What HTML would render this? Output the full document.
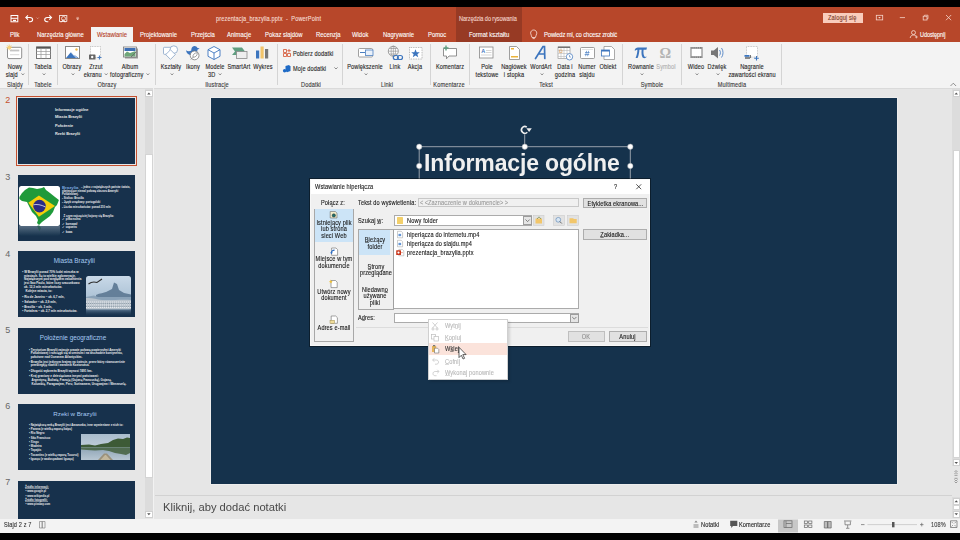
<!DOCTYPE html>
<html><head><meta charset="utf-8">
<style>
*{margin:0;padding:0;box-sizing:border-box}
html,body{width:960px;height:540px;overflow:hidden;background:#000;font-family:"Liberation Sans",sans-serif;color:#262626}
.a{position:absolute}
.t{position:absolute;white-space:nowrap;line-height:1}
.c{transform:translateX(-50%)}
#title{left:0;top:7px;width:960px;height:34.5px;background:#B7472A}
#ctx{left:455.8px;top:7px;width:66.2px;height:34.5px;background:#973A24}
#ribbon{left:0;top:41.5px;width:960px;height:47px;background:#F3F3F3;border-bottom:1px solid #DADADA}
#main{left:0;top:88.5px;width:960px;height:430.5px;background:#E6E6E6}
#status{left:0;top:519px;width:960px;height:13.6px;background:#F3F3F3}
.tab{position:absolute;top:32.2px;font-size:6.7px;transform:scaleX(.88);transform-origin:0 0;-webkit-text-stroke:0.1px currentColor;color:#fff;white-space:nowrap;line-height:5.85px}
.rl{position:absolute;font-size:6.5px;letter-spacing:.15px;-webkit-text-stroke:0.12px currentColor;color:#262626;white-space:nowrap;line-height:5.95px;transform:translateX(-50%) scaleX(.86);text-align:center}
.gl{position:absolute;top:82px;font-size:6.5px;letter-spacing:.15px;-webkit-text-stroke:0.12px currentColor;color:#3a3a3a;white-space:nowrap;line-height:5.95px;transform:translateX(-50%) scaleX(.86)}
.sep{position:absolute;top:44px;width:1px;height:41px;background:#D4D4D4}
.dd{display:inline-block;width:2.2px;height:2.2px;border-right:0.7px solid #777;border-bottom:0.7px solid #777;transform:rotate(45deg);vertical-align:1.5px;margin-left:1.5px}
.d{position:absolute;font-size:6.5px;letter-spacing:.15px;-webkit-text-stroke:0.12px currentColor;transform:scaleX(.86);transform-origin:0 0;color:#1a1a1a;white-space:nowrap;line-height:5.95px}
.dc{position:absolute;font-size:6.5px;letter-spacing:.15px;-webkit-text-stroke:0.12px currentColor;transform:translateX(-50%) scaleX(.86);color:#1a1a1a;white-space:nowrap;line-height:5.95px;text-align:center}
.btn{position:absolute;background:#E1E1E1;border:0.6px solid #ADADAD;padding-top:1px;font-size:6.5px;letter-spacing:.15px;color:#1a1a1a;text-align:center;display:flex;align-items:center;justify-content:center;white-space:nowrap;line-height:5.95px}
.btn span{display:inline-block;transform:scaleX(.86);-webkit-text-stroke:0.12px currentColor}
.m{position:absolute;left:445.3px;font-size:6.5px;letter-spacing:.15px;-webkit-text-stroke:0.12px currentColor;transform:scaleX(.86);transform-origin:0 0;white-space:nowrap;line-height:5.95px}
u{text-decoration:none;box-shadow:inset 0 -0.45px currentColor}
.thumb{position:absolute;left:18px;width:117px;height:66px;background:#17314C;overflow:hidden}
.num{position:absolute;left:5.2px;font-size:9px;color:#666;line-height:1}
</style></head><body>
<div id="title" class="a"></div>
<div id="ctx" class="a"></div>
<div id="ribbon" class="a"></div>
<div id="main" class="a"></div>
<div id="status" class="a"></div>

<!-- title bar text -->
<div class="d" style="left:216.3px;top:15.8px;color:#F6DDD4">prezentacja_brazylia.pptx &nbsp;- &nbsp;PowerPoint</div>
<div class="d" style="left:458.8px;top:16px;letter-spacing:-0.1px;color:#F2D3C9">Narzędzia do rysowania</div>


<svg class="a" style="left:0;top:0" width="960" height="42" viewBox="0 0 960 42">
<g fill="none" stroke="#fff" stroke-width="1">
<!-- save -->
<rect x="11" y="15.5" width="6.8" height="6.3" stroke-width="1"/>
<path d="M11 18.3H17.8" stroke-width="1"/>
<rect x="13" y="19.8" width="3" height="1.3" fill="#fff" stroke="none"/>
<!-- undo -->
<path d="M26.5 17.5H30C31.8 17.5 32.6 18.6 32.6 19.6C32.6 20.8 31.6 21.7 30.2 21.7H29" stroke-width="1.1"/>
<path d="M28 15.3L25.8 17.5L28 19.7" stroke-width="1.1"/>
<path d="M36.5 17.6L37.6 18.7L38.7 17.6" stroke="#F0C6B8" stroke-width="0.6"/>
<!-- redo -->
<path d="M50.8 17.5H47.3C45.5 17.5 44.7 18.6 44.7 19.6C44.7 20.8 45.7 21.7 47.1 21.7H48.3" stroke-width="1.1"/>
<path d="M49.3 15.3L51.5 17.5L49.3 19.7" stroke-width="1.1"/>
<!-- presenter -->
<path d="M59 15.5H67.3M59.5 16V21.5H66.8V16" stroke-width="0.8"/>
<circle cx="63.5" cy="18.5" r="2" stroke-width="0.7"/>
<path d="M61 22.5L63.2 19.5L65 22.5" stroke-width="0.7"/>
<!-- customize -->
<path d="M76.4 17.4H78.9M76.6 18.6L77.65 19.9L78.7 18.6Z" stroke="#F0C6B8" stroke-width="0.6" fill="#F0C6B8"/>
<!-- ribbon display options -->
<rect x="876.3" y="15.3" width="6.4" height="4.6" stroke="#F6D5CB" stroke-width="0.8"/>
<path d="M878.2 17L879.5 18.4L880.8 17Z" fill="#F6D5CB" stroke="none"/>
<!-- minimize -->
<path d="M899.8 17.6H905" stroke="#F6D5CB" stroke-width="0.8"/>
<!-- restore -->
<rect x="923.2" y="16.2" width="3.8" height="3.8" stroke="#F6D5CB" stroke-width="0.8"/>
<path d="M924.5 16V15.2H928V18.7H927" stroke="#F6D5CB" stroke-width="0.7"/>
<!-- close -->
<path d="M946 15L951.2 20.2M951.2 15L946 20.2" stroke="#F6D5CB" stroke-width="0.8"/>
<!-- share -->
<circle cx="913.5" cy="32.6" r="2" stroke="#F6E0D8" stroke-width="0.8"/>
<path d="M910.2 38C910.4 36 911.7 35 913.5 35C914.5 35 915.3 35.3 915.9 35.9" stroke="#F6E0D8" stroke-width="0.8"/>
<path d="M916.4 35.6V38.4M915 37H917.8" stroke="#F6E0D8" stroke-width="0.7"/>
<!-- lightbulb -->
<path d="M532 37.5C532 36 530.6 35 530.6 33.2C530.6 31.3 532 30 533.7 30C535.4 30 536.8 31.3 536.8 33.2C536.8 35 535.4 36 535.4 37.5Z" stroke="#FBE5DE" stroke-width="0.8"/>
<path d="M532.6 38.6H534.8" stroke="#FBE5DE" stroke-width="0.8"/>
</g>
</svg>
<div class="a" style="left:823px;top:13px;width:40px;height:9.5px;background:#F9CDBD"></div>
<div class="d" style="left:827.8px;top:15px;color:#7A3A28">Zaloguj się</div>

<!-- tabs -->
<div class="a" style="left:90.5px;top:27px;width:42.5px;height:15px;background:#F3F3F3"></div>
<div class="tab" style="left:10px">Plik</div>
<div class="tab" style="left:37px">Narzędzia główne</div>
<div class="tab" style="left:96.6px;color:#B5401F">Wstawianie</div>
<div class="tab" style="left:140px">Projektowanie</div>
<div class="tab" style="left:191px">Przejścia</div>
<div class="tab" style="left:227px">Animacje</div>
<div class="tab" style="left:265px">Pokaz slajdów</div>
<div class="tab" style="left:316px">Recenzja</div>
<div class="tab" style="left:352px">Widok</div>
<div class="tab" style="left:383px">Nagrywanie</div>
<div class="tab" style="left:428px">Pomoc</div>
<div class="tab" style="left:469px">Format kształtu</div>
<div class="tab" style="left:543.5px;letter-spacing:-0.15px">Powiedz mi, co chcesz zrobić</div>
<div class="tab" style="left:920px;font-size:6.3px;letter-spacing:-0.1px">Udostępnij</div>



<svg class="a" style="left:0;top:0" width="960" height="90" viewBox="0 0 960 90">
<g fill="none" stroke-width="1">
<!-- Nowy slajd -->
<rect x="7.5" y="47.3" width="14.2" height="11.3" rx="1.5" stroke="#8f8f8f" fill="#fff"/>
<rect x="10" y="49.6" width="9.3" height="1.8" fill="#c4c4c4" stroke="none"/>
<rect x="10" y="54.2" width="9.3" height="1" fill="#d6d6d6" stroke="none"/>
<path d="M9.2 44.6V50.2M6.4 47.4H12M7.2 45.4L11.2 49.4M11.2 45.4L7.2 49.4" stroke="#F2C45E" stroke-width="0.8"/>
<circle cx="9.2" cy="47.4" r="1.5" fill="#F6D27A" stroke="none"/>
<!-- Tabela -->
<rect x="36.5" y="47" width="14" height="11.5" stroke="#777" fill="#fff"/>
<rect x="36.5" y="46.7" width="14" height="2" fill="#555" stroke="none"/>
<path d="M36.5 51.5H50.5M36.5 54.5H50.5M41 48.5V58.5M46 48.5V58.5" stroke="#999" stroke-width="0.7"/>
<!-- Obrazy -->
<rect x="65.5" y="46.5" width="14" height="12" stroke="#888" fill="#fff"/>
<path d="M66 58L71 52L76 58Z" fill="#3C75BE" stroke="none"/>
<path d="M72 58L74.5 55L78.5 58Z" fill="#3C75BE" stroke="none"/>
<path d="M70.5 51.8L76.6 58" stroke="#fff" stroke-width="0.8"/>
<circle cx="76.5" cy="49.5" r="1.2" fill="#F0B847" stroke="none"/>
<!-- Zrzut ekranu -->
<rect x="90.5" y="46.5" width="10" height="11" stroke="#999" stroke-dasharray="0.8 0.8" stroke-width="0.6" fill="#fff"/>
<rect x="89" y="54.5" width="6.5" height="5" rx="0.6" fill="#666" stroke="none"/>
<circle cx="92.2" cy="57" r="1.2" fill="#fff" stroke="none"/>
<path d="M99.5 55.5V59.5M97.5 57.5H101.5" stroke="#4C7FC0" stroke-width="1.2"/>
<!-- Album -->
<rect x="125" y="48.5" width="13" height="10" fill="#9a9a9a" stroke="none"/>
<rect x="123.5" y="47" width="13" height="10" fill="#fff" stroke="#777" stroke-width="0.8"/>
<rect x="124.5" y="48" width="11" height="3" fill="#3D6FB4" stroke="none"/>
<path d="M124.5 54L127 51.5L130 53L135.5 51V56.5H124.5Z" fill="#6fa679" stroke="none"/>
<path d="M131 57L136 52" stroke="#666" stroke-width="0.8"/>
<!-- Ksztalty -->
<rect x="163.5" y="47.3" width="7.5" height="7" rx="0.8" stroke="#86A3C6" stroke-width="0.8" fill="#fff"/>
<circle cx="173.8" cy="49.6" r="3.8" stroke="#86A3C6" stroke-width="0.8" fill="#fff"/>
<path d="M170.5 49.8L175.3 54.6L170.5 59.4L165.7 54.6Z" stroke="#86A3C6" stroke-width="0.8" fill="#fff"/>
<!-- Ikony -->
<path d="M186 50.2C187.5 51.5 189.5 51.6 191.3 50.6C191 48.2 192.3 46.2 194.3 46C195.8 45.9 196.8 46.8 197.2 47.8L199.6 48.4L197.4 49.8C197.6 53 195 55 191.5 55C188.3 55 186.4 53 186 50.2Z" fill="#3C75BE" stroke="none"/>
<circle cx="194.6" cy="55.4" r="4.4" fill="#fff" stroke="#7a7a7a" stroke-width="0.8"/>
<path d="M190.8 59.6L193 57.2M193 57.2C192.6 55 194 53 197.3 52.6C197.4 55.5 195.8 57.4 193 57.2Z" stroke="#7a7a7a" stroke-width="0.7" fill="none"/>
<!-- Modele 3D -->
<path d="M214 46.5L220 49.7V56.3L214 59.5L208 56.3V49.7Z" stroke="#3C75BE" stroke-width="0.9" fill="#fff"/>
<path d="M208 49.7L214 53L220 49.7M214 53V59.5" stroke="#3C75BE" stroke-width="0.9"/>
<!-- SmartArt -->
<path d="M232 47.5H242L245 51.5L242 55H232L235 51.5Z" fill="#5F9E80" stroke="none"/>
<rect x="236.5" y="51.5" width="10.5" height="7" fill="#eee" stroke="#8a8a8a" stroke-width="0.8"/>
<!-- Wykres -->
<rect x="256" y="50.5" width="3.2" height="8" fill="#3C75BE" stroke="none"/>
<rect x="260.5" y="46.5" width="3.2" height="12" fill="#F2C46A" stroke="none"/>
<rect x="265" y="49" width="3.2" height="9.5" fill="#777" stroke="none"/>
<!-- Pobierz dodatki -->
<path d="M283.5 49.5h3v3h-3zM283.5 53.5h3v3h-3zM287.5 53.5h3v3h-3z" stroke="#D35230" stroke-width="0.8"/>
<path d="M289 49V52.5M287.3 50.7H290.8" stroke="#D35230" stroke-width="0.8"/>
<!-- Moje dodatki -->
<path d="M285.5 66L289 65L290.5 66.5V71L287 72.3L285.5 71Z" fill="#1F6BC6" stroke="none"/>
<circle cx="284.6" cy="70.8" r="1.7" fill="#1F6BC6" stroke="none"/>
<!-- Powiekszenie -->
<rect x="358.5" y="48.5" width="14" height="8.5" rx="1" stroke="#8a8a8a" stroke-width="0.8" fill="#fff"/>
<rect x="365.5" y="50" width="7.5" height="5.5" stroke="#4C7FC0" stroke-width="0.8" fill="#EAF1FA"/>
<path d="M360 52.5H365" stroke="#4C7FC0" stroke-width="1"/>
<!-- Link -->
<circle cx="393.3" cy="51.2" r="5" stroke="#888" stroke-width="0.8" fill="#fff"/>
<path d="M388.3 51.2H398.3M393.3 46.2V56.2M389.5 48.5H397M389.5 54H397" stroke="#888" stroke-width="0.6"/>
<ellipse cx="393.3" cy="51.2" rx="2.2" ry="5" stroke="#888" stroke-width="0.6"/>
<rect x="393.3" y="55.5" width="5" height="4" rx="2" stroke="#3C75BE" stroke-width="1.2"/>
<rect x="397.5" y="55.5" width="5" height="4" rx="2" stroke="#3C75BE" stroke-width="1.2"/>
<!-- Akcja -->
<rect x="409.5" y="47.5" width="12.5" height="11.5" stroke="#777" stroke-width="0.6" stroke-dasharray="0.8 0.9" fill="#fff"/>
<path d="M415.5 49.2L416.7 52.2L419.8 52.3L417.4 54.3L418.2 57.3L415.5 55.6L412.8 57.3L413.6 54.3L411.2 52.3L414.3 52.2Z" fill="#3C75BE" stroke="none"/>
<!-- Komentarz -->
<path d="M443.5 48.5H456.5V56H449L446.5 58.8V56H443.5Z" stroke="#777" stroke-width="0.8" fill="#fff"/>
<path d="M446 45.5V50.5M443.5 48H448.5" stroke="#5F9E80" stroke-width="1.4"/>
<!-- Pole tekstowe -->
<rect x="479.5" y="47" width="13.5" height="11" stroke="#888" stroke-width="0.8" fill="#fff"/>
<text x="481.3" y="53.3" font-size="5.5" font-family="Liberation Sans" font-weight="bold" fill="#3C75BE" stroke="none">A</text>
<path d="M486 50.5H491.5M486 52.5H491.5M481 55H491.5" stroke="#ccc" stroke-width="0.8"/>
<!-- Naglowek -->
<path d="M509.5 46.5H516.5L519.5 49.5V59.5H509.5Z" stroke="#888" stroke-width="0.8" fill="#fff"/>
<rect x="511" y="48" width="3" height="1.5" fill="#EBB33A" stroke="none"/>
<rect x="511" y="56" width="7" height="1.5" fill="#EBB33A" stroke="none"/>
<!-- WordArt -->
<path d="M535.5 58.5L543 46.5H544.5L544.8 58.5M538.5 54H544.5" stroke="#3C75BE" stroke-width="1.7" stroke-linecap="round"/>
<!-- Data i godzina -->
<rect x="558" y="47" width="12" height="11.5" stroke="#999" stroke-width="0.7" fill="#fff"/>
<rect x="558" y="46.6" width="12" height="1.3" fill="#666" stroke="none"/>
<path d="M558 50.5H570M558 53.5H570M558 56.5H566M561 48V58.5M564 48V58.5M567 48V54" stroke="#bbb" stroke-width="0.6"/>
<rect x="559.5" y="50" width="2.5" height="2.5" stroke="#E0A060" stroke-width="0.6"/>
<circle cx="569.5" cy="56.8" r="3.2" stroke="#4C7FC0" stroke-width="0.8" fill="#fff"/>
<path d="M569.5 55V57H571" stroke="#4C7FC0" stroke-width="0.6"/>
<!-- Numer slajdu -->
<rect x="580.5" y="47.5" width="14" height="11" rx="1" stroke="#888" stroke-width="0.8" fill="#fff"/>
<path d="M582 49.5H593" stroke="#ddd" stroke-width="0.8"/>
<path d="M586.6 50.8L585.6 56.2M588.6 50.8L587.6 56.2M585 52.5H589.6M584.6 54.5H589.2" stroke="#3C75BE" stroke-width="0.6"/>
<!-- Obiekt -->
<path d="M604 46.5H611.5L614.5 49.5V59.5H604Z" stroke="#888" stroke-width="0.7" fill="#fff"/>
<rect x="601.5" y="50" width="8" height="6" stroke="#3C75BE" stroke-width="0.8" fill="#fff"/>
<rect x="601.5" y="50" width="8" height="1.5" fill="#3C75BE" stroke="none"/>
<!-- Rownanie -->
<path d="M634.6 50.2C635.2 48.3 636.3 47.5 638 47.5H647L646.4 49.8H643.6C643.3 52 643.4 54.5 644.3 56.3C644.7 57.1 645.4 57.3 646.3 56.6L646.6 57.1C645.6 58.3 643.8 58.6 642.6 57.4C641.5 56.1 641.3 53.2 641.6 49.8H639.4C639.2 52.6 638.7 55.8 637.6 58H635.6C636.7 55.6 637.3 52.6 637.4 49.8C636.4 49.8 635.7 50.2 635.2 50.8Z" fill="#3C75BE" stroke="none"/>
<!-- Symbol -->
<text x="659.5" y="58" font-size="14.5" font-family="Liberation Serif" font-weight="bold" fill="#b4b4b4" stroke="none">Ω</text>
<!-- Wideo -->
<rect x="690.5" y="47" width="12" height="11" fill="#777" stroke="none"/>
<rect x="691.5" y="48.8" width="10" height="7.4" fill="#fff" stroke="none"/>
<path d="M691.5 47.9H701.5M691.5 57.1H701.5" stroke="#fff" stroke-width="0.7" stroke-dasharray="1 0.9"/>
<!-- Dzwiek -->
<path d="M711 50.5H713.8L718 47V58.5L713.8 55H711Z" fill="#777" stroke="none"/>
<path d="M719.5 50C720.7 51.5 720.7 54 719.5 55.5M721.5 48C723.5 50.5 723.5 55 721.5 57.5" stroke="#3C75BE" stroke-width="0.8"/>
<!-- Nagranie -->
<rect x="746.5" y="46.5" width="11" height="10.5" stroke="#999" stroke-width="0.6" stroke-dasharray="0.8 0.8" fill="#fff"/>
<rect x="744.5" y="55" width="5" height="1.8" fill="#3C75BE" stroke="none"/>
<rect x="745" y="57" width="5" height="2" fill="#888" stroke="none"/>
<path d="M750.5 55V58" stroke="#555" stroke-width="0.8"/>
<path d="M756.5 56V60.5M754.2 58.2H758.8" stroke="#3C75BE" stroke-width="1.1"/>
</g>
</svg>

<!-- ribbon separators -->
<div class="sep" style="left:28px"></div>
<div class="sep" style="left:57px"></div>
<div class="sep" style="left:155px"></div>
<div class="sep" style="left:277px"></div>
<div class="sep" style="left:342px"></div>
<div class="sep" style="left:430px"></div>
<div class="sep" style="left:469px"></div>
<div class="sep" style="left:622px"></div>
<div class="sep" style="left:681px"></div>
<div class="sep" style="left:781px"></div>
<!-- ribbon labels row1 -->
<div class="rl" style="left:14.5px;top:63.5px">Nowy</div>
<div class="rl" style="left:14.5px;top:71.5px">slajd <svg width="4" height="3" style="margin-left:1.6px;vertical-align:0.8px;overflow:visible"><path d="M0.4 0.4L2 2L3.6 0.4" stroke="#6a6a6a" stroke-width="0.75" fill="none"/></svg></div>
<div class="rl" style="left:43px;top:63.5px">Tabela</div>
<div class="rl" style="left:43px;top:71.5px"><svg width="4" height="3" style="margin-left:1.6px;vertical-align:0.8px;overflow:visible"><path d="M0.4 0.4L2 2L3.6 0.4" stroke="#6a6a6a" stroke-width="0.75" fill="none"/></svg></div>
<div class="rl" style="left:72px;top:63.5px">Obrazy</div>
<div class="rl" style="left:72px;top:71.5px"><svg width="4" height="3" style="margin-left:1.6px;vertical-align:0.8px;overflow:visible"><path d="M0.4 0.4L2 2L3.6 0.4" stroke="#6a6a6a" stroke-width="0.75" fill="none"/></svg></div>
<div class="rl" style="left:96px;top:63.5px">Zrzut</div>
<div class="rl" style="left:96px;top:71.5px">ekranu <svg width="4" height="3" style="margin-left:1.6px;vertical-align:0.8px;overflow:visible"><path d="M0.4 0.4L2 2L3.6 0.4" stroke="#6a6a6a" stroke-width="0.75" fill="none"/></svg></div>
<div class="rl" style="left:130px;top:63.5px">Album</div>
<div class="rl" style="left:130px;top:71.5px">fotograficzny <svg width="4" height="3" style="margin-left:1.6px;vertical-align:0.8px;overflow:visible"><path d="M0.4 0.4L2 2L3.6 0.4" stroke="#6a6a6a" stroke-width="0.75" fill="none"/></svg></div>
<div class="rl" style="left:171px;top:63.5px">Kształty</div>
<div class="rl" style="left:171px;top:71.5px"><svg width="4" height="3" style="margin-left:1.6px;vertical-align:0.8px;overflow:visible"><path d="M0.4 0.4L2 2L3.6 0.4" stroke="#6a6a6a" stroke-width="0.75" fill="none"/></svg></div>
<div class="rl" style="left:192.5px;top:63.5px">Ikony</div>
<div class="rl" style="left:214.5px;top:63.5px">Modele</div>
<div class="rl" style="left:214.5px;top:71.5px">3D <svg width="4" height="3" style="margin-left:1.6px;vertical-align:0.8px;overflow:visible"><path d="M0.4 0.4L2 2L3.6 0.4" stroke="#6a6a6a" stroke-width="0.75" fill="none"/></svg></div>
<div class="rl" style="left:238.7px;top:63.5px">SmartArt</div>
<div class="rl" style="left:262.5px;top:63.5px">Wykres</div>
<div class="d" style="left:292.5px;top:50.5px;color:#262626">Pobierz dodatki</div>
<div class="d" style="left:292.5px;top:66.3px;color:#262626">Moje dodatki</div>
<div class="t" style="left:332.5px;top:67px;font-size:5.9px;color:#555"><svg width="4" height="3" style="margin-left:1.6px;vertical-align:0.8px;overflow:visible"><path d="M0.4 0.4L2 2L3.6 0.4" stroke="#6a6a6a" stroke-width="0.75" fill="none"/></svg></div>
<div class="rl" style="left:365.4px;top:63.5px">Powiększenie</div>
<div class="rl" style="left:365.4px;top:71.5px"><svg width="4" height="3" style="margin-left:1.6px;vertical-align:0.8px;overflow:visible"><path d="M0.4 0.4L2 2L3.6 0.4" stroke="#6a6a6a" stroke-width="0.75" fill="none"/></svg></div>
<div class="rl" style="left:395px;top:63.5px">Link</div>
<div class="rl" style="left:415.4px;top:63.5px">Akcja</div>
<div class="rl" style="left:449.6px;top:63.5px">Komentarz</div>
<div class="rl" style="left:486.5px;top:63.5px">Pole</div>
<div class="rl" style="left:486.5px;top:71.5px">tekstowe</div>
<div class="rl" style="left:513.75px;top:63.5px">Nagłówek</div>
<div class="rl" style="left:513.75px;top:71.5px">i stopka</div>
<div class="rl" style="left:540.8px;top:63.5px">WordArt</div>
<div class="rl" style="left:540.8px;top:71.5px"><svg width="4" height="3" style="margin-left:1.6px;vertical-align:0.8px;overflow:visible"><path d="M0.4 0.4L2 2L3.6 0.4" stroke="#6a6a6a" stroke-width="0.75" fill="none"/></svg></div>
<div class="rl" style="left:565.2px;top:63.5px">Data i</div>
<div class="rl" style="left:565.2px;top:71.5px">godzina</div>
<div class="rl" style="left:587px;top:63.5px">Numer</div>
<div class="rl" style="left:587px;top:71.5px">slajdu</div>
<div class="rl" style="left:608.3px;top:63.5px">Obiekt</div>
<div class="rl" style="left:640.8px;top:63.5px">Równanie</div>
<div class="rl" style="left:640.8px;top:71.5px"><svg width="4" height="3" style="margin-left:1.6px;vertical-align:0.8px;overflow:visible"><path d="M0.4 0.4L2 2L3.6 0.4" stroke="#6a6a6a" stroke-width="0.75" fill="none"/></svg></div>
<div class="rl" style="left:666.3px;top:63.5px;color:#B0B0B0">Symbol</div>
<div class="rl" style="left:696px;top:63.5px">Wideo</div>
<div class="rl" style="left:696px;top:71.5px"><svg width="4" height="3" style="margin-left:1.6px;vertical-align:0.8px;overflow:visible"><path d="M0.4 0.4L2 2L3.6 0.4" stroke="#6a6a6a" stroke-width="0.75" fill="none"/></svg></div>
<div class="rl" style="left:717.3px;top:63.5px">Dźwięk</div>
<div class="rl" style="left:717.3px;top:71.5px"><svg width="4" height="3" style="margin-left:1.6px;vertical-align:0.8px;overflow:visible"><path d="M0.4 0.4L2 2L3.6 0.4" stroke="#6a6a6a" stroke-width="0.75" fill="none"/></svg></div>
<div class="rl" style="left:752.3px;top:63.5px">Nagranie</div>
<div class="rl" style="left:752.3px;top:71.5px">zawartości ekranu</div>
<!-- group labels -->
<div class="gl" style="left:14.5px">Slajdy</div>
<div class="gl" style="left:43px">Tabele</div>
<div class="gl" style="left:106.7px">Obrazy</div>
<div class="gl" style="left:216.7px">Ilustracje</div>
<div class="gl" style="left:310.6px">Dodatki</div>
<div class="gl" style="left:386.7px">Linki</div>
<div class="gl" style="left:449px">Komentarze</div>
<div class="gl" style="left:545.8px">Tekst</div>
<div class="gl" style="left:652.3px">Symbole</div>
<div class="gl" style="left:731.5px">Multimedia</div>
<svg class="a" style="left:0;top:0" width="960" height="90"><path d="M950.5 86L953.3 83.2L956.1 86" stroke="#666" stroke-width="0.7" fill="none"/></svg>


<!-- slide pane -->
<div class="a" style="left:153px;top:88px;width:1px;height:431px;background:#F2F2F2"></div>
<div class="a" style="left:145px;top:89px;width:8px;height:428px;background:#DCDCDC"></div>
<div class="a" style="left:145px;top:89.5px;width:7.5px;height:7.5px;background:#fff;border:0.5px solid #d0d0d0"></div>
<div class="a" style="left:145px;top:154.2px;width:7.5px;height:323.8px;background:#fff;border:0.5px solid #d4d4d4"></div>
<div class="a" style="left:145px;top:510.5px;width:7.5px;height:7px;background:#fff;border:0.5px solid #d0d0d0"></div>

<div class="num" style="top:96.2px;color:#C4502F">2</div>
<div class="num" style="top:173.1px">3</div>
<div class="num" style="top:249.5px">4</div>
<div class="num" style="top:325.9px">5</div>
<div class="num" style="top:402.2px">6</div>
<div class="num" style="top:478.2px">7</div>

<div class="a" style="left:16px;top:96px;width:121px;height:70px;border:1.6px solid #C4502F;background:#E6E6E6"></div>
<div class="thumb" style="top:98px">
  <div class="t" style="left:37px;top:9.9px;font-size:3.9px;font-weight:bold;color:#e8e8e8">Informacje ogólne</div>
  <div class="t" style="left:37px;top:17.3px;font-size:3.9px;font-weight:bold;color:#e8e8e8">Miasta Brazylii</div>
  <div class="t" style="left:37px;top:26px;font-size:3.9px;font-weight:bold;color:#e8e8e8">Położenie</div>
  <div class="t" style="left:37px;top:33.5px;font-size:3.9px;font-weight:bold;color:#e8e8e8">Rzeki Brazylii</div>
</div>

<div class="thumb" style="top:175px">
  <div class="a" style="left:1.2px;top:11.1px;width:40.8px;height:40px;background:#fff;border-radius:2.5px"></div>
  <div class="a" style="left:1.2px;top:51.1px;width:40.8px;height:10px;background:linear-gradient(#6d8194,#15324C);opacity:.75;border-radius:0 0 2.5px 2.5px"></div>
  <svg class="a" style="left:0;top:0" width="117" height="66" viewBox="0 0 117 66">
    <path d="M1.4 22L4 18L7 15L11 12.5L15 13L19 14L24 13L26 12L28 15L32 18L37 22L40.9 25L39 30L37 32L35 37L32 41L28 44L24 47L21 50L19 48L20 45L18 41L14 37L12 33L9 27L4 26L1.4 24Z" fill="#1f9a3a"/>
    <path d="M10.3 27.8L20.9 20.6L37 31.1L20.9 41.7Z" fill="#F5CF0A"/>
    <circle cx="21.5" cy="31.1" r="6.3" fill="#2B2C86"/>
    <path d="M15.4 29.8C18.5 29 23 29.6 27.6 32" stroke="#fff" stroke-width="0.7" fill="none"/>
    <path d="M19 51L21 50L23 53L21.5 56Z" fill="#1c5a44" opacity=".6"/>
  </svg>
  <div class="t" style="left:44px;top:10.6px;font-size:4.3px;font-weight:bold;color:#7BA5DE">Brazylia</div>
  <div class="t" style="left:63px;top:11.8px;font-size:2.7px;font-weight:bold;color:#eee">– jedno z największych państw świata,</div>
  <div class="t" style="left:44px;top:15.8px;font-size:2.7px;font-weight:bold;color:#eee">obejmujące niemal połowę obszaru Ameryki</div>
  <div class="t" style="left:44px;top:18.6px;font-size:2.7px;font-weight:bold;color:#eee">Południowej.</div>
  <div class="t" style="left:44px;top:23.2px;font-size:2.7px;font-weight:bold;color:#eee">▪ Stolica: Brasilia</div>
  <div class="t" style="left:44px;top:27.3px;font-size:2.7px;font-weight:bold;color:#eee">▪ Język urzędowy: portugalski</div>
  <div class="t" style="left:44px;top:31.8px;font-size:2.7px;font-weight:bold;color:#eee">▪ Liczba mieszkańców: ponad 210 mln</div>
  <div class="t" style="left:45.5px;top:40.8px;font-size:2.7px;font-weight:bold;color:#eee">Z czym najczęściej kojarzy się Brazylia:</div>
  <div class="t" style="left:44px;top:44.3px;font-size:2.7px;font-weight:bold;color:#eee">✓ piłka nożna</div>
  <div class="t" style="left:44px;top:48.5px;font-size:2.7px;font-weight:bold;color:#eee">✓ karnawał</div>
  <div class="t" style="left:44px;top:52.4px;font-size:2.7px;font-weight:bold;color:#eee">✓ capoeira</div>
  <div class="t" style="left:44px;top:56.8px;font-size:2.7px;font-weight:bold;color:#eee">✓ kawa</div>
</div>

<div class="thumb" style="top:251.3px">
  <div class="t c" style="left:56.3px;top:7.2px;font-size:6.4px;color:#A6C9F2">Miasta Brazylii</div>
  <svg class="a" style="left:68.3px;top:24.3px" width="45" height="41" viewBox="0 0 45 41">
   <defs><linearGradient id="sky4" x1="0" y1="0" x2="0" y2="1"><stop offset="0" stop-color="#c9d9e8"/><stop offset="1" stop-color="#9db6cc"/></linearGradient>
   <linearGradient id="ref4" x1="0" y1="0" x2="0" y2="1"><stop offset="0" stop-color="#6f8aa3" stop-opacity=".8"/><stop offset="1" stop-color="#15324C" stop-opacity="0"/></linearGradient></defs>
   <rect x="0" y="0" width="45" height="33.4" rx="2.5" fill="url(#sky4)"/>
   <path d="M10 19C14 17 18 17 20 16L26 13L28 6.5L31 8L33 14L38 17L45 18.5V23H10Z" fill="#647f99"/>
   <path d="M0 21L8 19.5L12 21H45V24H0Z" fill="#8aa2b8"/>
   <path d="M0 22C6 21.5 10 23 16 24C24 25 34 23 45 24V33.4H0Z" fill="#b9c3cc"/>
   <path d="M0 26H45M0 29H45M0 31.5H45" stroke="#e6eaee" stroke-width="1" stroke-dasharray="1.2 0.8"/>
   <path d="M0 27.5H45M0 30.3H45" stroke="#6f7f8c" stroke-width="0.7" stroke-dasharray="0.8 1.3"/>
   <path d="M2.5 8C5 6 8 5.5 11 6.5L16 3" stroke="#2f2f2f" stroke-width="1.1" fill="none"/>
   <rect x="0" y="33.4" width="45" height="7" fill="url(#ref4)"/>
  </svg>
  <div class="t" style="left:4.3px;top:19.8px;font-size:3px;font-weight:bold;color:#ececec;line-height:3.65px">• W Brazylii ponad 70% ludzi mieszka w<br>&nbsp; miastach. Są to wielkie aglomeracje.<br>&nbsp; Największym pod względem zaludnienia<br>&nbsp; jest Sao Paulo, które liczy szacunkowo<br>&nbsp; ok. 12,3 mln mieszkańców.</div>
  <div class="t" style="left:7.5px;top:38.8px;font-size:3px;font-weight:bold;color:#ececec">Kolejne miasta, to:</div>
  <div class="t" style="left:4.3px;top:43.8px;font-size:3px;font-weight:bold;color:#ececec;line-height:4.7px">• Rio de Janeiro – ok. 6,7 mln,<br>• Salvador – ok. 2,9 mln,<br>• Brasilia – ok. 3 mln,<br>• Fortaleza – ok. 2,7 mln mieszkańców.</div>
</div>

<div class="thumb" style="top:327.8px">
  <div class="t c" style="left:55px;top:7.5px;font-size:6.4px;color:#A6C9F2">Położenie geograficzne</div>
  <div class="t" style="left:11px;top:20.8px;font-size:2.98px;font-weight:bold;color:#ececec;line-height:3.75px">• Terytorium Brazylii zajmuje prawie połowę powierzchni Ameryki<br>&nbsp;&nbsp;Południowej i rozciąga się w centrum i na wschodzie kontynentu,<br>&nbsp;&nbsp;położone nad Oceanem Atlantyckim.</div>
  <div class="t" style="left:11px;top:32.8px;font-size:2.98px;font-weight:bold;color:#ececec;line-height:3.75px">• Brazylia jest jedynym krajem na świecie, przez który równocześnie<br>&nbsp;&nbsp;przebiegają równik i zwrotnik Koziorożca.</div>
  <div class="t" style="left:11px;top:41.5px;font-size:2.98px;font-weight:bold;color:#ececec;line-height:4.8px">• Długość wybrzeża Brazylii wynosi 7491 km.<br>• Kraj graniczy z dziesięcioma innymi państwami:</div>
  <div class="t" style="left:13.5px;top:51.5px;font-size:2.98px;font-weight:bold;color:#ececec;line-height:3.75px">Argentyną, Boliwią, Francją (Gujaną Francuską), Gujaną,<br>Kolumbią, Paragwajem, Peru, Surinamem, Urugwajem i Wenezuelą.</div>
</div>

<div class="thumb" style="top:404.3px">
  <div class="t c" style="left:57px;top:6.8px;font-size:6.2px;color:#A6C9F2">Rzeki w Brazylii</div>
  <div class="t" style="left:11px;top:18.6px;font-size:2.85px;font-weight:bold;color:#ececec;line-height:4.25px">• Największą rzeką Brazylii jest Amazonka, inne wymieniane z nich to:<br>• Parana (z wielką zaporą Itaipu)<br>• Rio Negro<br>• São Francisco<br>• Xingu<br>• Madeira<br>• Tapajós<br>• Tocantins (z wielką zaporą Tucurui)<br>• Iguaçu (z wodospadami Iguaçu)</div>
  <svg class="a" style="left:63.3px;top:30px" width="49" height="26" viewBox="0 0 49 26">
   <defs><linearGradient id="sky6" x1="0" y1="0" x2="0" y2="1"><stop offset="0" stop-color="#a9bccd"/><stop offset="1" stop-color="#d5dde3"/></linearGradient>
   <linearGradient id="wat6" x1="0" y1="0" x2="0" y2="1"><stop offset="0" stop-color="#8ea4b6"/><stop offset="1" stop-color="#b7c6d2"/></linearGradient></defs>
   <rect width="49" height="26" fill="url(#sky6)"/>
   <path d="M0 11L8 10.5L14 11.5L20 10L27 9L32 6L37 4.5L42 5L46 3.5L49 4V13.5H0Z" fill="#3d5a36"/>
   <rect y="13.5" width="49" height="12.5" fill="url(#wat6)"/>
   <path d="M0 13.5H49V19L45 21L40 20L34 19L28 17L22 16L14 16.5L6 16L0 15.5Z" fill="#44603e" opacity=".85"/>
   <path d="M17 26L23 19.5H26L32 26Z" fill="#9a917c"/>
   <path d="M19.5 26L24 21H25L29.5 26Z" fill="#c2b79c"/>
  </svg>
</div>

<div class="thumb" style="top:481px;height:38px">
  <div class="t" style="left:7px;top:4.6px;font-size:2.8px;font-weight:bold;color:#e8e8e8;padding-bottom:0.3px;background:linear-gradient(#e8e8e8,#e8e8e8) 0 100%/100% 0.45px no-repeat">Źródło informacji:</div>
  <div class="t" style="left:7.5px;top:9.2px;font-size:2.7px;font-weight:bold;color:#e8e8e8;line-height:4.5px">• www.google.pl<br>• www.wikipedia.pl</div>
  <div class="t" style="left:7px;top:17.8px;font-size:2.8px;font-weight:bold;color:#e8e8e8;padding-bottom:0.3px;background:linear-gradient(#e8e8e8,#e8e8e8) 0 100%/100% 0.45px no-repeat">Źródło fotografii:</div>
  <div class="t" style="left:7.5px;top:22.8px;font-size:2.7px;font-weight:bold;color:#e8e8e8">• www.pixabay.com</div>
</div>


<!-- main slide -->
<div class="a" style="left:210.5px;top:98px;width:686.5px;height:386.3px;background:#15324C;box-shadow:0 0 0 1px #EDEDED"></div>
<div class="t" style="left:424.3px;top:151.9px;font-size:23px;font-weight:bold;letter-spacing:-0.15px;color:#F0F0F0;will-change:transform">Informacje ogólne</div>
<svg class="a" style="left:0;top:0" width="960" height="540" viewBox="0 0 960 540">
  <g stroke="#AEB4BB" stroke-width="0.85" fill="none">
    <path d="M419.2 146.7H630.3M419.2 146.7V180M630.3 146.7V180M524.7 146.7V134.5"/>
  </g>
  <g fill="#fff" stroke="#9aa0a6" stroke-width="0.5">
    <circle cx="419.2" cy="146.7" r="2.7"/><circle cx="524.8" cy="146.7" r="2.7"/><circle cx="630.3" cy="146.7" r="2.7"/>
    <circle cx="419.2" cy="166" r="2.7"/><circle cx="630.3" cy="166" r="2.7"/>
  </g>
  <path d="M526.8 127.1A3.4 3.4 0 1 0 527.3 132.3" stroke="#EDEDED" stroke-width="1.6" fill="none"/>
  <path d="M526.4 128.2L531.8 128.2L529.1 131.9Z" fill="#EDEDED"/>
</svg>



<!-- right scrollbar -->
<div class="a" style="left:952px;top:89px;width:8px;height:377px;background:#DCDCDC"></div>
<div class="a" style="left:952.5px;top:89.5px;width:7.5px;height:7.5px;background:#fff;border:0.5px solid #d0d0d0"></div>
<div class="a" style="left:952.5px;top:150px;width:7.5px;height:308px;background:#fff;border:0.5px solid #d4d4d4"></div>
<div class="a" style="left:952.5px;top:459px;width:7.5px;height:7px;background:#fff;border:0.5px solid #d0d0d0"></div>
<svg class="a" style="left:0;top:0" width="960" height="540" viewBox="0 0 960 540">
 <g stroke="#666" stroke-width="0.6" fill="none">
  <path d="M954.5 472L956 470.5L957.5 472M954.5 474L956 472.5L957.5 474M954.5 475.3H957.5"/>
  <path d="M954.5 478.3H957.5M954.5 479.5L956 481L957.5 479.5M954.5 481.5L956 483L957.5 481.5"/>
 </g>
</svg>
<!-- notes scrollbar -->
<div class="a" style="left:952px;top:497px;width:8px;height:21px;background:#DCDCDC"></div>
<div class="a" style="left:952.5px;top:497.5px;width:7.5px;height:7px;background:#fff;border:0.5px solid #d0d0d0"></div>
<div class="a" style="left:952.5px;top:505px;width:7.5px;height:5px;background:#fff;border:0.5px solid #d4d4d4"></div>
<div class="a" style="left:952.5px;top:510.5px;width:7.5px;height:7px;background:#fff;border:0.5px solid #d0d0d0"></div>

<!-- status bar -->
<div class="d" style="left:4px;top:522.3px;color:#333">Slajd 2 z 7</div>
<svg class="a" style="left:0;top:0" width="960" height="540" viewBox="0 0 960 540">
 <g stroke="#777" stroke-width="0.6" fill="none">
  <path d="M39.5 521.5H42.2V528H39.5ZM42.2 521.5H45V528H42.2Z"/>
  <!-- notatki -->
  <path d="M693.5 528H698.5V524H693.5Z" fill="#bbb" stroke="none"/>
  <path d="M696 520.5L694.3 522.5H697.7Z" fill="#888" stroke="none"/>
 </g>
 <path d="M730.2 520.8H737.3V526H733L731.2 528V526H730.2Z" fill="#555"/>
 <rect x="778" y="519.5" width="20" height="13" fill="#C8C8C8"/>
 <g stroke="#666" stroke-width="0.7" fill="none">
  <rect x="784" y="520.8" width="8" height="6.8"/>
  <path d="M786 521V527.5M786 523.5H791.5"/>
  <rect x="804.3" y="521" width="3.2" height="2.4"/><rect x="808.7" y="521" width="3.2" height="2.4"/>
  <rect x="804.3" y="525" width="3.2" height="2.4"/><rect x="808.7" y="525" width="3.2" height="2.4"/>
  <path d="M824.3 521.5H827.7V528H824.3ZM827.7 521.5H831.2V528H827.7Z" fill="#bbb"/>
  <path d="M844 521H851.4M845 521.5V524.8H850.4V521.5M847.7 525V528M846 528.3H849.4"/>
  <path d="M861 524.6H864.5M920 524.6H923.5M921.75 522.8V526.4"/>
  <path d="M950.5 520.8H957V527.5H950.5Z"/>
  <path d="M951.5 521.8L953 523.3M956 521.8L954.5 523.3M951.5 526.5L953 525M956 526.5L954.5 525" stroke-width="0.6"/>
 </g>
 <path d="M867.4 524.6H917" stroke="#B8B8B8" stroke-width="0.6"/>
 <rect x="892" y="522" width="2.5" height="5.3" fill="#555"/>
</svg>
<div class="d" style="left:701px;top:522.4px;color:#262626">Notatki</div>
<div class="d" style="left:738.6px;top:522.4px;color:#262626">Komentarze</div>
<div class="d" style="left:930.8px;top:522.4px;color:#444">108%</div>

<svg class="a" style="left:0;top:0" width="960" height="540" viewBox="0 0 960 540"><g fill="#555">
<path d="M147.1 94.5L148.85 92.5L150.6 94.5Z"/>
<path d="M147.1 513.3L148.85 515.3L150.6 513.3Z"/>
<path d="M954.5 94.5L956.25 92.5L958 94.5Z"/>
<path d="M954.5 462L956.25 464L958 462Z"/>
<path d="M954.5 502.3L956.25 500.3L958 502.3Z"/>
<path d="M954.5 513.3L956.25 515.3L958 513.3Z"/>
</g></svg>
<!-- dialog -->
<div class="a" style="left:309px;top:178px;width:342px;height:169px;background:rgba(0,0,0,0.4)"></div>
<div class="a" style="left:310px;top:179px;width:340px;height:167px;background:#F0F0F0;border:1px solid #F7F7F7"></div>
<div class="a" style="left:310.5px;top:179.5px;width:339px;height:14.5px;background:#fff"></div>
<div class="d" style="left:314.7px;top:184px">Wstawianie hiperłącza</div>
<div class="d" style="left:614px;top:183.5px;font-size:6.5px">?</div>
<svg class="a" style="left:0;top:0" width="960" height="540" viewBox="0 0 960 540">
 <path d="M636.3 184.3L641.2 189.2M641.2 184.3L636.3 189.2" stroke="#222" stroke-width="0.75" fill="none"/>
</svg>
<div class="d" style="left:320.8px;top:200px">Połącz z:</div>
<div class="d" style="left:358px;top:200px">Tekst do wyświetlenia:</div>
<div class="a" style="left:417.5px;top:198.3px;width:161.2px;height:9.2px;background:#F0F0F0;border:0.6px solid #C8C8C8"></div>
<div class="d" style="left:420px;top:200.2px;color:#9a9a9a">&lt;&thinsp;&lt;Zaznaczenie w dokumencie&gt;&thinsp;&gt;</div>
<div class="btn" style="left:583.3px;top:198.3px;width:63.4px;height:10px"><span>Etykietka ekranowa...</span></div>

<!-- left nav -->
<div class="a" style="left:313.9px;top:208.6px;width:39.8px;height:133.1px;border:0.7px solid #A8A8A8;background:#F0F0F0"></div>
<div class="a" style="left:314.5px;top:209.2px;width:38.6px;height:32.5px;background:#CCE4F7"></div>
<div class="dc" style="left:333.8px;top:219.8px;line-height:6.6px">Istniejący plik<br>lub strona<br>sieci Web</div>
<div class="dc" style="left:333.8px;top:256px;line-height:6.8px">Miejsce w tym<br>dokumencie</div>
<div class="dc" style="left:333.8px;top:289px;line-height:6.1px">Utwórz nowy<br>dokument</div>
<div class="dc" style="left:333.8px;top:324.5px">Adres e-mail</div>
<svg class="a" style="left:0;top:0" width="960" height="540" viewBox="0 0 960 540">
 <!-- icon1 -->
 <path d="M330.2 211.5H335.3L337 213.2V218H330.2Z" fill="#F3EDCB" stroke="#6a6a6a" stroke-width="0.6"/>
 <circle cx="333.8" cy="215.4" r="1.7" fill="#1E6E6A" stroke="#222" stroke-width="0.4"/>
 <!-- icon2 -->
 <path d="M331.6 248H336L337.6 249.6V255.3H331.6Z" fill="#fff" stroke="#6a6a6a" stroke-width="0.6"/>
 <path d="M334.6 250.2C332.6 250.2 331.4 251.3 331.4 253.2" stroke="#2F6FC4" stroke-width="1.2" fill="none"/>
 <path d="M330.3 252.2L331.4 254.3L332.8 252.4Z" fill="#2F6FC4"/>
 <!-- icon3 -->
 <path d="M331 280.5H335.5L337.2 282.2V287.6H331Z" fill="#fff" stroke="#6a6a6a" stroke-width="0.6"/>
 <path d="M330.8 279.6L331.4 281L332.8 281.2L331.6 282L332 283.4L330.8 282.6L329.6 283.4L330 282L328.9 281.2L330.2 281Z" fill="#EFC23A"/>
 <!-- icon4 -->
 <path d="M331.2 316H335.7L337.4 317.7V323.3H331.2Z" fill="#fff" stroke="#6a6a6a" stroke-width="0.6"/>
 <rect x="330" y="320.2" width="4.6" height="3.3" fill="#F0DC9A" stroke="#8a7a40" stroke-width="0.4"/>
</svg>

<!-- search row -->
<div class="d" style="left:358px;top:218px">Szukaj <u>w</u>:</div>
<div class="a" style="left:394px;top:215px;width:138px;height:11px;background:#fff;border:0.6px solid #ABABAB"></div>
<div class="a" style="left:396.5px;top:217.2px;width:6.5px;height:6.5px;background:#F3D06B;border-radius:0.6px"></div>
<div class="d" style="left:407px;top:218px">Nowy folder</div>
<div class="a" style="left:523px;top:215.6px;width:8.6px;height:9.8px;background:#E5E5E5;border:0.6px solid #9c9c9c"></div>
<svg class="a" style="left:0;top:0" width="960" height="540"><path d="M525.5 219.5L527.6 221.6L529.7 219.5" stroke="#555" stroke-width="0.7" fill="none"/></svg>
<svg class="a" style="left:0;top:0" width="960" height="540" viewBox="0 0 960 540">
 <rect x="533.5" y="215.3" width="10.5" height="10" fill="#E2E2E2" stroke="#C8C8C8" stroke-width="0.5"/>
 <rect x="535.5" y="218.5" width="6.5" height="5" fill="#F2C66A"/>
 <path d="M537 219L539 216.8L541 219" stroke="#5a7a3a" stroke-width="0.6" fill="none"/>
 <rect x="553.5" y="215.3" width="11" height="10" fill="#E2E2E2" stroke="#C8C8C8" stroke-width="0.5"/>
 <circle cx="558.3" cy="219.8" r="2.4" fill="#D8E6F3" stroke="#5583B5" stroke-width="0.6"/>
 <path d="M559.8 221.5L561.8 223.5" stroke="#444" stroke-width="0.8"/>
 <rect x="567.5" y="215.3" width="11" height="10" fill="#E2E2E2" stroke="#C8C8C8" stroke-width="0.5"/>
 <path d="M569.5 218.2H573L574 219H576.7V223.3H569.5Z" fill="#F2C66A"/>
</svg>

<!-- sub nav -->
<div class="a" style="left:358.3px;top:229px;width:35.5px;height:80.5px;border:0.7px solid #A8A8A8;background:#F0F0F0"></div>
<div class="a" style="left:359px;top:229.7px;width:31px;height:25.8px;background:#CCE4F7"></div>
<div class="dc" style="left:374.5px;top:237px;line-height:6.5px"><u>B</u>ieżący<br>folder</div>
<div class="dc" style="left:376px;top:264px;line-height:6.3px"><u>S</u>trony<br>przeglądane</div>
<div class="dc" style="left:374.5px;top:286.8px;line-height:6.5px">Niedawn<u>o</u><br>używane<br>pliki</div>

<!-- file list -->
<div class="a" style="left:393.3px;top:229.2px;width:185.4px;height:80.3px;background:#fff;border:0.7px solid #ABABAB;border-left:1.4px solid #A0A0A0"></div>
<svg class="a" style="left:0;top:0" width="960" height="540" viewBox="0 0 960 540">
 <path d="M397.5 231.3H401.2L402.6 232.7V237.8H397.5Z" fill="#fff" stroke="#9a9a9a" stroke-width="0.5"/>
 <circle cx="399.8" cy="235" r="1.8" fill="#CFE3F7"/><path d="M398.6 235H401" stroke="#1F5FBF" stroke-width="1.2"/>
 <path d="M397.5 240.3H401.2L402.6 241.7V246.8H397.5Z" fill="#fff" stroke="#9a9a9a" stroke-width="0.5"/>
 <circle cx="399.8" cy="244" r="1.8" fill="#CFE3F7"/><path d="M398.6 244H401" stroke="#1F5FBF" stroke-width="1.2"/>
 <path d="M398.8 249.4H402.4L403.8 250.8V255.8H398.8Z" fill="#fff" stroke="#9a9a9a" stroke-width="0.5"/>
 <rect x="396.2" y="250.3" width="4.8" height="4.6" rx="0.5" fill="#C9361B"/>
 <circle cx="398.5" cy="252.6" r="1.1" fill="#fff"/>
 <path d="M401.3 252.6H402.6" stroke="#E06040" stroke-width="0.8"/>
</svg>
<div class="d" style="left:406.9px;top:231.5px">hiperłącza do internetu.mp4</div>
<div class="d" style="left:406.9px;top:240.5px">hiperłącza do slajdu.mp4</div>
<div class="d" style="left:406.9px;top:249.5px">prezentacja_brazylia.pptx</div>
<div class="btn" style="left:583.3px;top:229.2px;width:63.4px;height:11.1px"><span><u>Z</u>akładka...</span></div>

<!-- address -->
<div class="d" style="left:358px;top:315px">A<u>d</u>res:</div>
<div class="a" style="left:394.4px;top:313px;width:184.3px;height:9.8px;background:#fff;border:0.6px solid #ABABAB"></div>
<div class="a" style="left:570px;top:313.5px;width:8.5px;height:9px;background:#E5E5E5;border:0.6px solid #9c9c9c"></div>
<svg class="a" style="left:0;top:0" width="960" height="540"><path d="M572.2 317L574.3 319.1L576.4 317" stroke="#555" stroke-width="0.7" fill="none"/></svg>
<div class="a" style="left:356px;top:327.3px;width:292px;height:0.7px;background:#DCDCDC"></div>
<div class="btn" style="left:567.5px;top:330.8px;width:37.2px;height:10.9px;color:#8f8f8f;border-color:#BFBFBF"><span>OK</span></div>
<div class="btn" style="left:609px;top:330.8px;width:37.7px;height:10.9px"><span>Anuluj</span></div>

<!-- context menu -->
<div class="a" style="left:429.5px;top:320.5px;width:80px;height:61px;background:rgba(0,0,0,0.12);filter:blur(1px)"></div>
<div class="a" style="left:428.3px;top:319.2px;width:79.7px;height:60.5px;background:#fff;border:0.6px solid #D0D0D0"></div>
<div class="a" style="left:429px;top:343px;width:78.3px;height:11.7px;background:#FBE3DB"></div>
<div class="m" style="top:323px;color:#B8B8B8">Wyt<u>n</u>ij</div>
<div class="m" style="top:334.8px;color:#B8B8B8"><u>K</u>opiuj</div>
<div class="m" style="top:346.2px;color:#333">W<u>k</u>lej</div>
<div class="m" style="top:358.8px;color:#B8B8B8"><u>C</u>ofnij</div>
<div class="m" style="top:370.3px;color:#B8B8B8"><u>W</u>ykonaj ponownie</div>
<svg class="a" style="left:0;top:0" width="960" height="540" viewBox="0 0 960 540">
 <g stroke="#BDBDBD" stroke-width="0.7" fill="none">
  <path d="M432.5 322.5L437.5 328M437.5 322.5L432.5 328"/>
  <circle cx="433" cy="329" r="1.1"/><circle cx="437" cy="329" r="1.1"/>
  <rect x="431.5" y="334.5" width="4" height="4.5"/><rect x="434" y="336.5" width="4.5" height="4.5" fill="#fff"/>
  <path d="M433 360H436.3C437.8 360 438.5 361 438.5 362.2C438.5 363.5 437.5 364.2 436.3 364.2H435M434.2 358.3L432.5 360L434.2 361.7"/>
  <path d="M438.5 371.5H435.2C433.7 371.5 433 372.5 433 373.7C433 375 434 375.7 435.2 375.7H436.5M437.3 369.8L439 371.5L437.3 373.2"/>
 </g>
 <rect x="432" y="346" width="4.2" height="6" fill="#E5B55A"/>
 <rect x="433" y="345" width="2.2" height="1.3" fill="#777"/>
 <path d="M434.5 348.2H437.5L438.8 349.5V353H434.5Z" fill="#fff" stroke="#555" stroke-width="0.5"/>
 <!-- cursor -->
 <path d="M459 347.3V357.6L461.3 355.3L463.1 359L464.6 358.3L462.8 354.6H466.1Z" fill="#fff" stroke="#111" stroke-width="0.65" stroke-linejoin="round"/>
</svg>

<!-- notes -->
<div class="a" style="left:155px;top:495px;width:797px;height:1px;background:#D2D2D2"></div>
<div class="t" style="left:163.2px;top:501.1px;font-size:11.6px;transform:scaleX(.965);transform-origin:0 0;color:#484848">Kliknij, aby dodać notatki</div>

</body></html>
